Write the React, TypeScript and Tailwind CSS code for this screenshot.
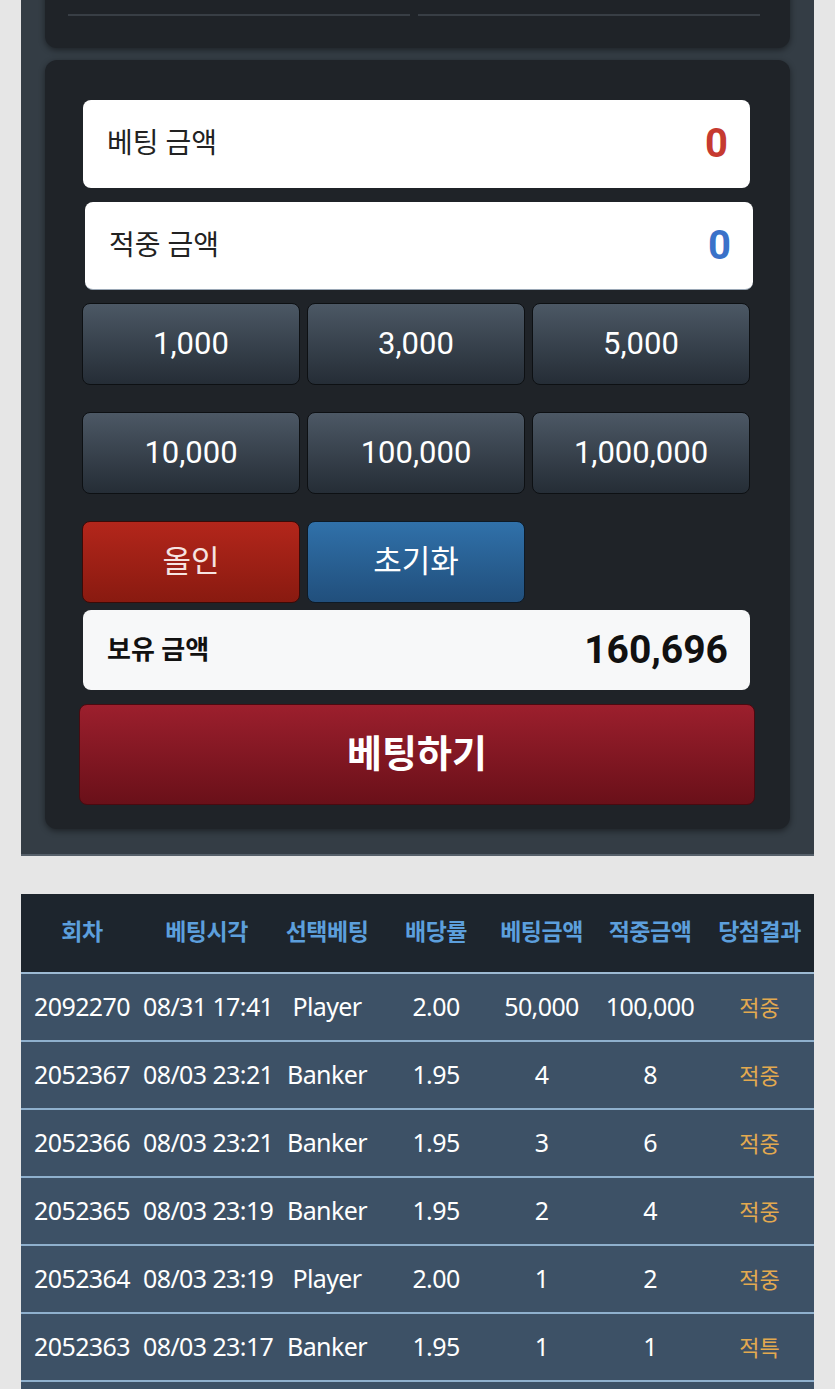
import React from 'react';

const FONT = 'font-[Roboto,"Noto_Sans_CJK_KR",sans-serif]';

const chips = ['1,000', '3,000', '5,000', '10,000', '100,000', '1,000,000'];

const columns = ['회차', '베팅시각', '선택베팅', '배당률', '베팅금액', '적중금액', '당첨결과'];

const rows = [
  ['2092270', '08/31 17:41', 'Player', '2.00', '50,000', '100,000', '적중'],
  ['2052367', '08/03 23:21', 'Banker', '1.95', '4', '8', '적중'],
  ['2052366', '08/03 23:21', 'Banker', '1.95', '3', '6', '적중'],
  ['2052365', '08/03 23:19', 'Banker', '1.95', '2', '4', '적중'],
  ['2052364', '08/03 23:19', 'Player', '2.00', '1', '2', '적중'],
  ['2052363', '08/03 23:17', 'Banker', '1.95', '1', '1', '적특'],
  ['2052362', '08/03 23:15', 'Player', '2.00', '1', '2', '적중'],
];

const chipBtn =
  'h-[82px] rounded-lg border border-[#0d1013] bg-gradient-to-b from-[#4c5865] to-[#252d36] text-white text-[31px] flex items-center justify-center';

const App: React.FC = () => {
  return (
    <div className={`min-h-screen bg-[#e6e6e6] overflow-hidden ${FONT}`}>
      <div className="mx-[21px] bg-[#343d45] px-6 pb-[25px] border-b-2 border-[#56606a]">
        {/* previous card, cut off at the top */}
        <div className="-mt-[40px] h-[88px] rounded-xl bg-[#1f2328] shadow-[0_2px_6px_rgba(0,0,0,0.45)] pl-[23px] pr-[30px] pt-[54px]">
          <div className="flex gap-2">
            <div className="flex-1 h-[2px] bg-[#383e45]"></div>
            <div className="flex-1 h-[2px] bg-[#383e45]"></div>
          </div>
        </div>

        <div className="mt-3 rounded-xl bg-[#1f2328] shadow-[0_2px_6px_rgba(0,0,0,0.45)] pt-10 pb-6 pl-[38px] pr-[40px]">
          <div className="h-[88px] rounded-lg bg-white flex items-center justify-between pl-6 pr-[22px]">
            <span className="text-[28px] text-[#222]">베팅 금액</span>
            <span className="text-[40px] font-bold text-[#c63a30]">0</span>
          </div>
          <div className="mt-[14px] ml-[2px] -mr-[3px] h-[88px] rounded-lg bg-white border-b border-[#9aa7b5] flex items-center justify-between pl-6 pr-[22px]">
            <span className="text-[28px] text-[#222]">적중 금액</span>
            <span className="text-[40px] font-bold text-[#3a72c9]">0</span>
          </div>

          <div className="mt-[13px] grid grid-cols-3 gap-x-[7px] gap-y-[27px] -ml-px">
            {chips.map((c) => (
              <button key={c} className={chipBtn}>
                {c}
              </button>
            ))}
            <button className="h-[82px] rounded-lg border border-[#3a0b08] bg-gradient-to-b from-[#b3261b] to-[#891a10] text-[#f6e4e2] text-[31px] flex items-center justify-center">
              올인
            </button>
            <button className="h-[82px] rounded-lg border border-[#0e1a26] bg-gradient-to-b from-[#3071aa] to-[#214f7c] text-white text-[31px] flex items-center justify-center">
              초기화
            </button>
          </div>

          <div className="mt-[7px] h-[80px] rounded-lg bg-[#f7f8f9] flex items-center justify-between pl-6 pr-[22px]">
            <span className="text-[26px] font-bold text-[#111]">보유 금액</span>
            <span className="text-[39px] font-bold text-[#111]">160,696</span>
          </div>

          <button className="mt-[14px] -ml-1 w-[calc(100%+9px)] h-[101px] rounded-lg border border-[#4a0a10] bg-gradient-to-b from-[#9c1f2d] to-[#6a1019] text-white text-[38px] font-bold flex items-center justify-center">
            베팅하기
          </button>
        </div>
      </div>

      <div className="mx-[21px] mt-[38px]">
        <div className="grid grid-cols-[122px_127px_114px_104px_107px_110px_109px] h-[80px] bg-[#1d252d] items-center border-b-2 border-[#9dbad3]">
          {columns.map((c) => (
            <div key={c} className="text-center text-[23px] font-bold tracking-[-0.5px] text-[#5c9fdc]">
              {c}
            </div>
          ))}
        </div>
        {rows.map((r) => (
          <div
            key={r[0]}
            className="grid grid-cols-[122px_127px_114px_104px_107px_110px_109px] h-[68px] bg-[#3d5166] items-center border-b-2 border-[#8fb0cd] font-['Noto_Sans','Noto_Sans_CJK_KR',sans-serif]"
          >
            {r.map((v, i) => (
              <div
                key={i}
                className={`text-center whitespace-nowrap ${
                  i === 6 ? 'text-[22px] text-[#e3a94f]' : 'text-[25px] tracking-[-0.6px] text-white'
                }`}
              >
                {v}
              </div>
            ))}
          </div>
        ))}
      </div>
    </div>
  );
};

export default App;
